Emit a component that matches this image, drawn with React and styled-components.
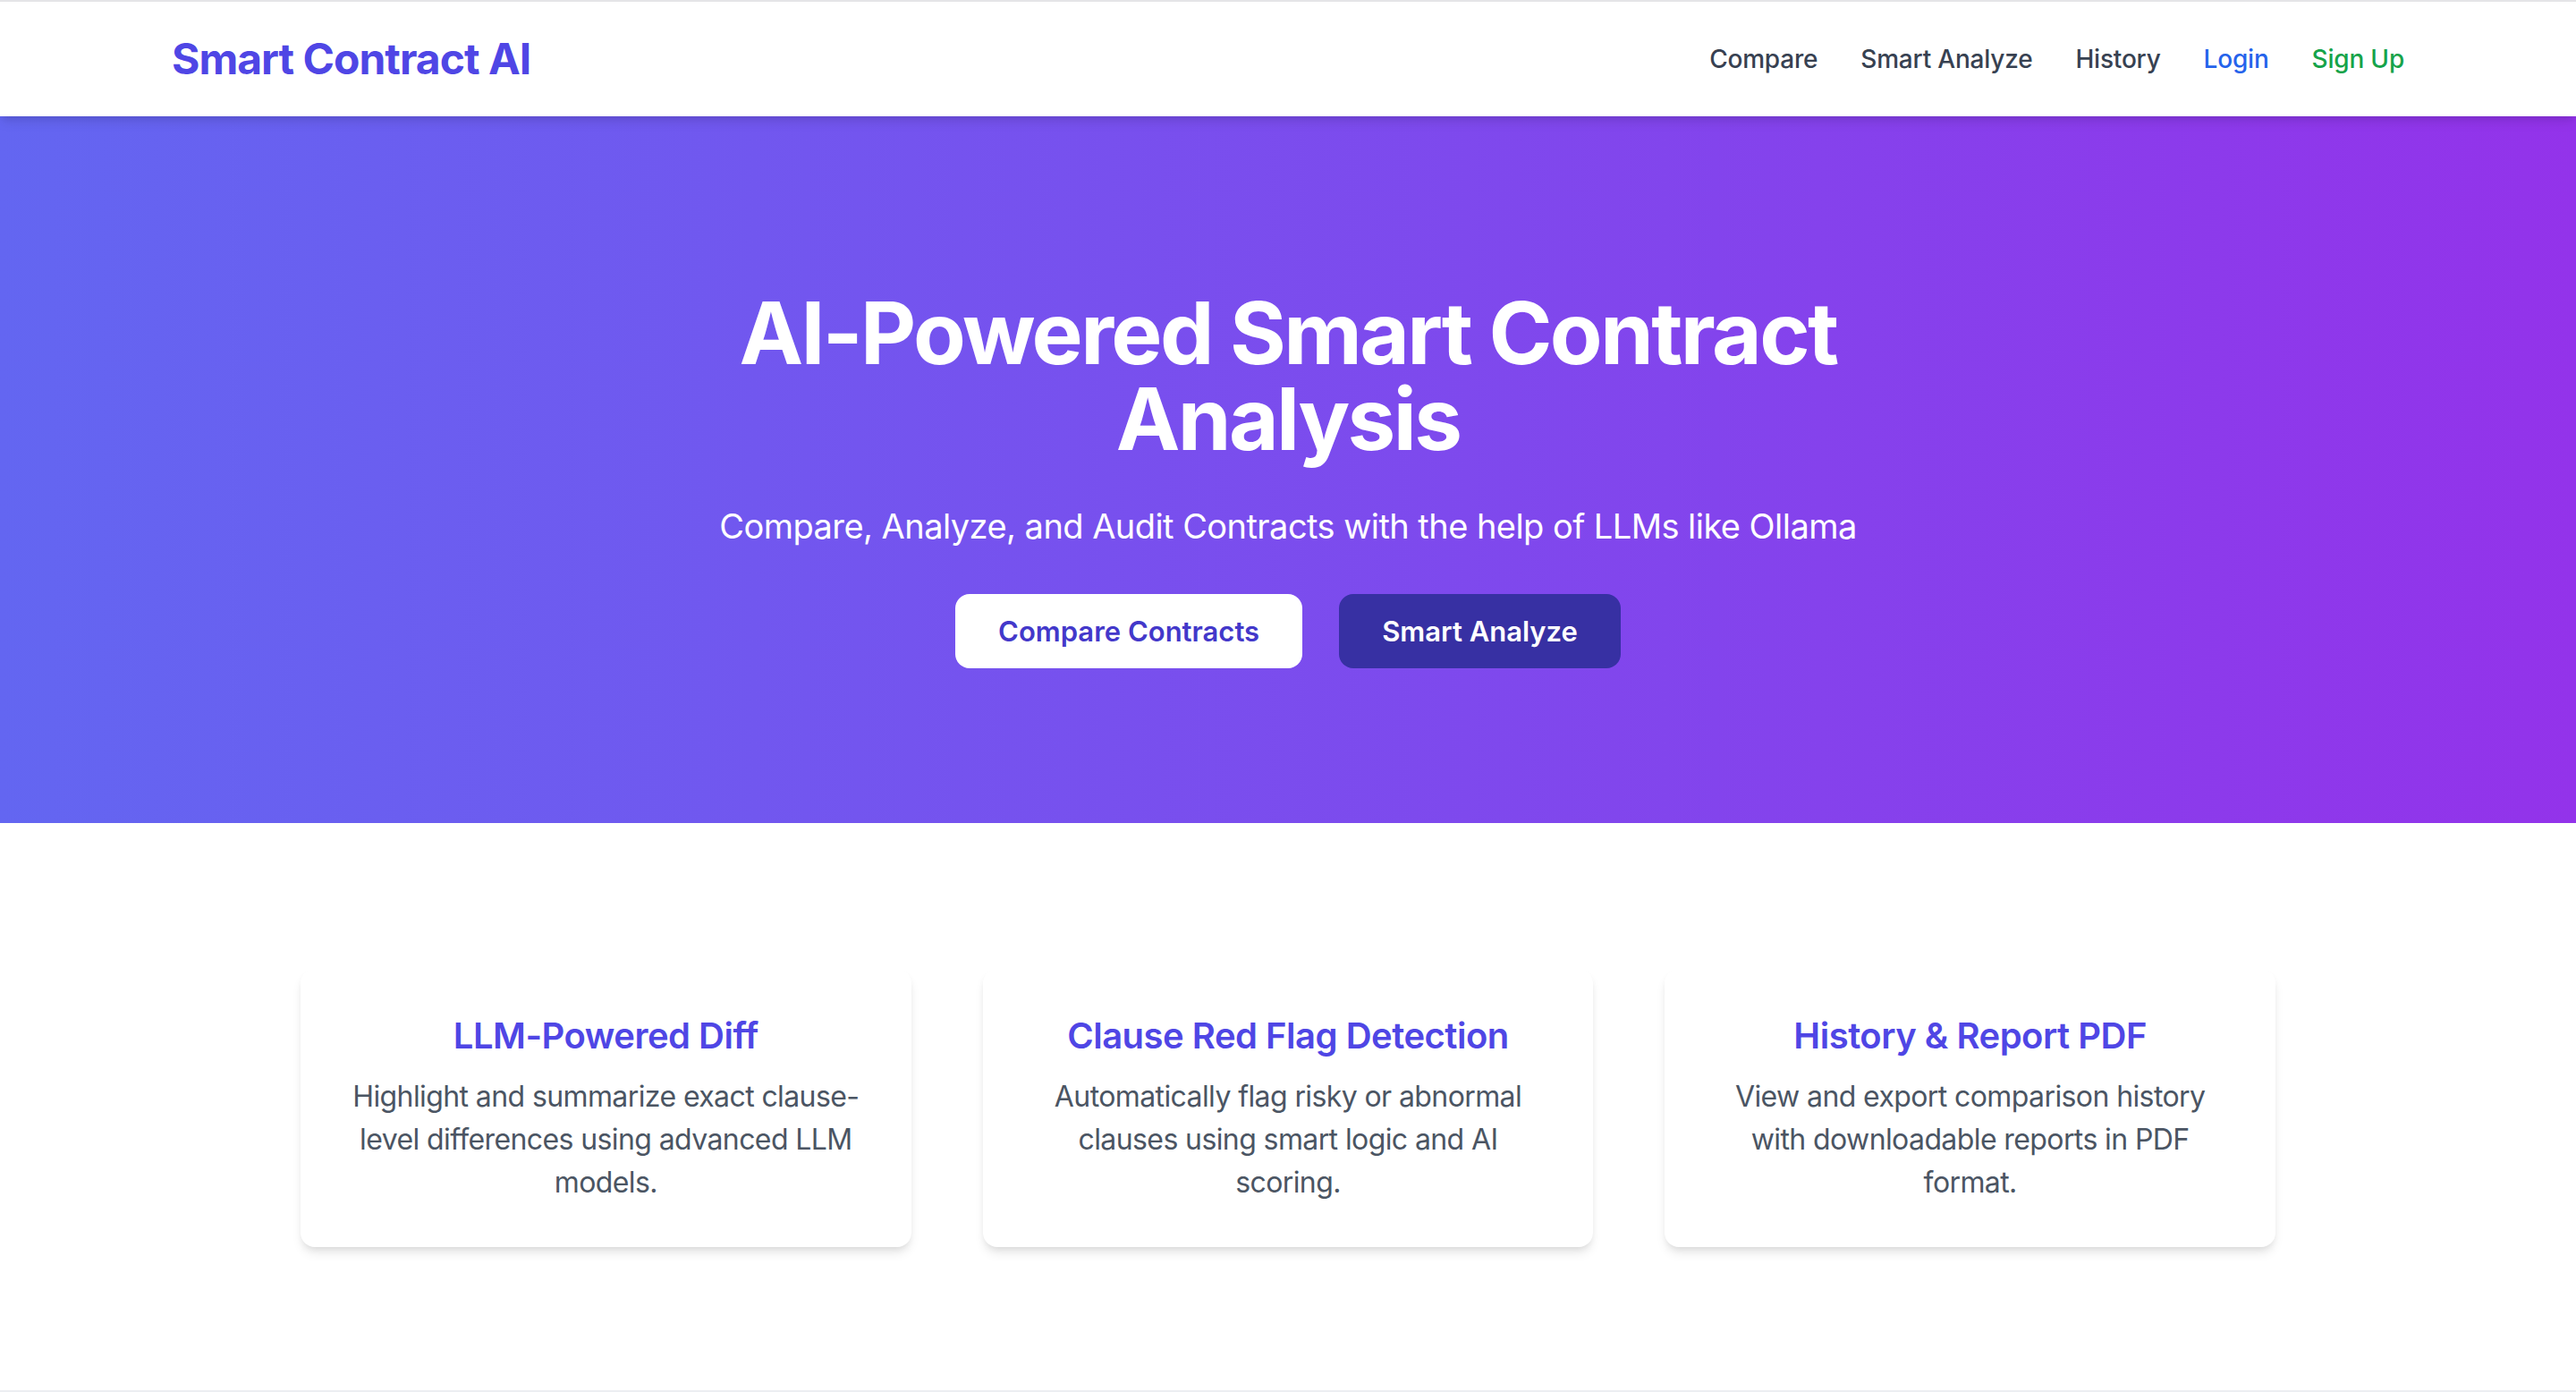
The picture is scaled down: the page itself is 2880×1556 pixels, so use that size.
import React from "react";
import styled, { createGlobalStyle } from "styled-components";

const GlobalStyle = createGlobalStyle`
  html, body {
    margin: 0;
    padding: 0;
    background: #ffffff;
  }
  body {
    font-family: "Inter", "Liberation Sans", sans-serif;
    -webkit-font-smoothing: antialiased;
  }
  * {
    box-sizing: border-box;
  }
`;

const Header = styled.header`
  background: #ffffff;
  border-top: 2px solid #e4e4e7;
  box-shadow: 0 8px 12px -2px rgba(0, 0, 0, 0.1), 0 4px 8px -4px rgba(0, 0, 0, 0.1);
  position: relative;
  z-index: 2;
`;

const HeaderInner = styled.div`
  max-width: 2560px;
  margin: 0 auto;
  padding: 32px 32px;
  display: flex;
  align-items: center;
  justify-content: space-between;
`;

const Logo = styled.div`
  font-size: 48px;
  line-height: 64px;
  font-weight: 700;
  color: #4f46e5;
  letter-spacing: -1px;
`;

const Nav = styled.nav`
  display: flex;
  align-items: center;
  gap: 48px;
`;

const NavLink = styled.a`
  font-size: 28px;
  line-height: 40px;
  font-weight: 500;
  letter-spacing: -0.2px;
  color: ${(p) => p.color || "#374151"};
  text-decoration: none;
  cursor: pointer;
`;

const Hero = styled.section`
  background: linear-gradient(to right, #6366f1, #9333ea);
  padding: 194px 32px 173px;
  display: flex;
  flex-direction: column;
  align-items: center;
  text-align: center;
  color: #ffffff;
`;

const HeroTitle = styled.h1`
  margin: 0 0 44px;
  max-width: 1536px;
  font-size: 96px;
  line-height: 96px;
  font-weight: 700;
  letter-spacing: -2.6px;
`;

const HeroSubtitle = styled.p`
  margin: 0 0 48px;
  font-size: 38px;
  line-height: 56px;
  font-weight: 400;
  letter-spacing: -0.55px;
`;

const ButtonRow = styled.div`
  display: flex;
  gap: 41px;
  justify-content: center;
`;

const Button = styled.button`
  height: 83px;
  padding: 0 48px;
  border: none;
  border-radius: 16px;
  font-family: inherit;
  font-size: 31px;
  font-weight: 600;
  cursor: pointer;
  background: ${(p) => (p.$primary ? "#ffffff" : "#3730a3")};
  color: ${(p) => (p.$primary ? "#4338ca" : "#ffffff")};
`;

const Features = styled.section`
  padding: 163px 32px 160px;
`;

const Grid = styled.div`
  max-width: 2208px;
  margin: 0 auto;
  display: grid;
  grid-template-columns: repeat(3, 1fr);
  gap: 80px;
`;

const Card = styled.div`
  background: #ffffff;
  border-radius: 16px;
  padding: 47px 48px 48px;
  text-align: center;
  box-shadow: 0 8px 12px -2px rgba(0, 0, 0, 0.1), 0 4px 8px -4px rgba(0, 0, 0, 0.1);
`;

const CardTitle = styled.h3`
  margin: 0 0 16px;
  font-size: 40px;
  line-height: 56px;
  font-weight: 600;
  color: #4f46e5;
  letter-spacing: -0.5px;
`;

const CardText = styled.p`
  margin: 0;
  font-size: 32px;
  line-height: 48px;
  letter-spacing: -0.6px;
  color: #4b5563;
`;

const Footer = styled.footer`
  border-top: 2px solid #eceef2;
  height: 40px;
`;

const features = [
  {
    title: "LLM-Powered Diff",
    text: "Highlight and summarize exact clause-level differences using advanced LLM models.",
  },
  {
    title: "Clause Red Flag Detection",
    text: "Automatically flag risky or abnormal clauses using smart logic and AI scoring.",
  },
  {
    title: "History & Report PDF",
    text: "View and export comparison history with downloadable reports in PDF format.",
  },
];

export default function App() {
  return (
    <>
      <GlobalStyle />
      <Header>
        <HeaderInner>
          <Logo>Smart Contract AI</Logo>
          <Nav>
            <NavLink>Compare</NavLink>
            <NavLink>Smart Analyze</NavLink>
            <NavLink>History</NavLink>
            <NavLink color="#2563eb">Login</NavLink>
            <NavLink color="#16a34a">Sign Up</NavLink>
          </Nav>
        </HeaderInner>
      </Header>

      <Hero>
        <HeroTitle>AI-Powered Smart Contract Analysis</HeroTitle>
        <HeroSubtitle>
          Compare, Analyze, and Audit Contracts with the help of LLMs like Ollama
        </HeroSubtitle>
        <ButtonRow>
          <Button $primary>Compare Contracts</Button>
          <Button>Smart Analyze</Button>
        </ButtonRow>
      </Hero>

      <Features>
        <Grid>
          {features.map((f) => (
            <Card key={f.title}>
              <CardTitle>{f.title}</CardTitle>
              <CardText>{f.text}</CardText>
            </Card>
          ))}
        </Grid>
      </Features>
      <Footer />
    </>
  );
}
